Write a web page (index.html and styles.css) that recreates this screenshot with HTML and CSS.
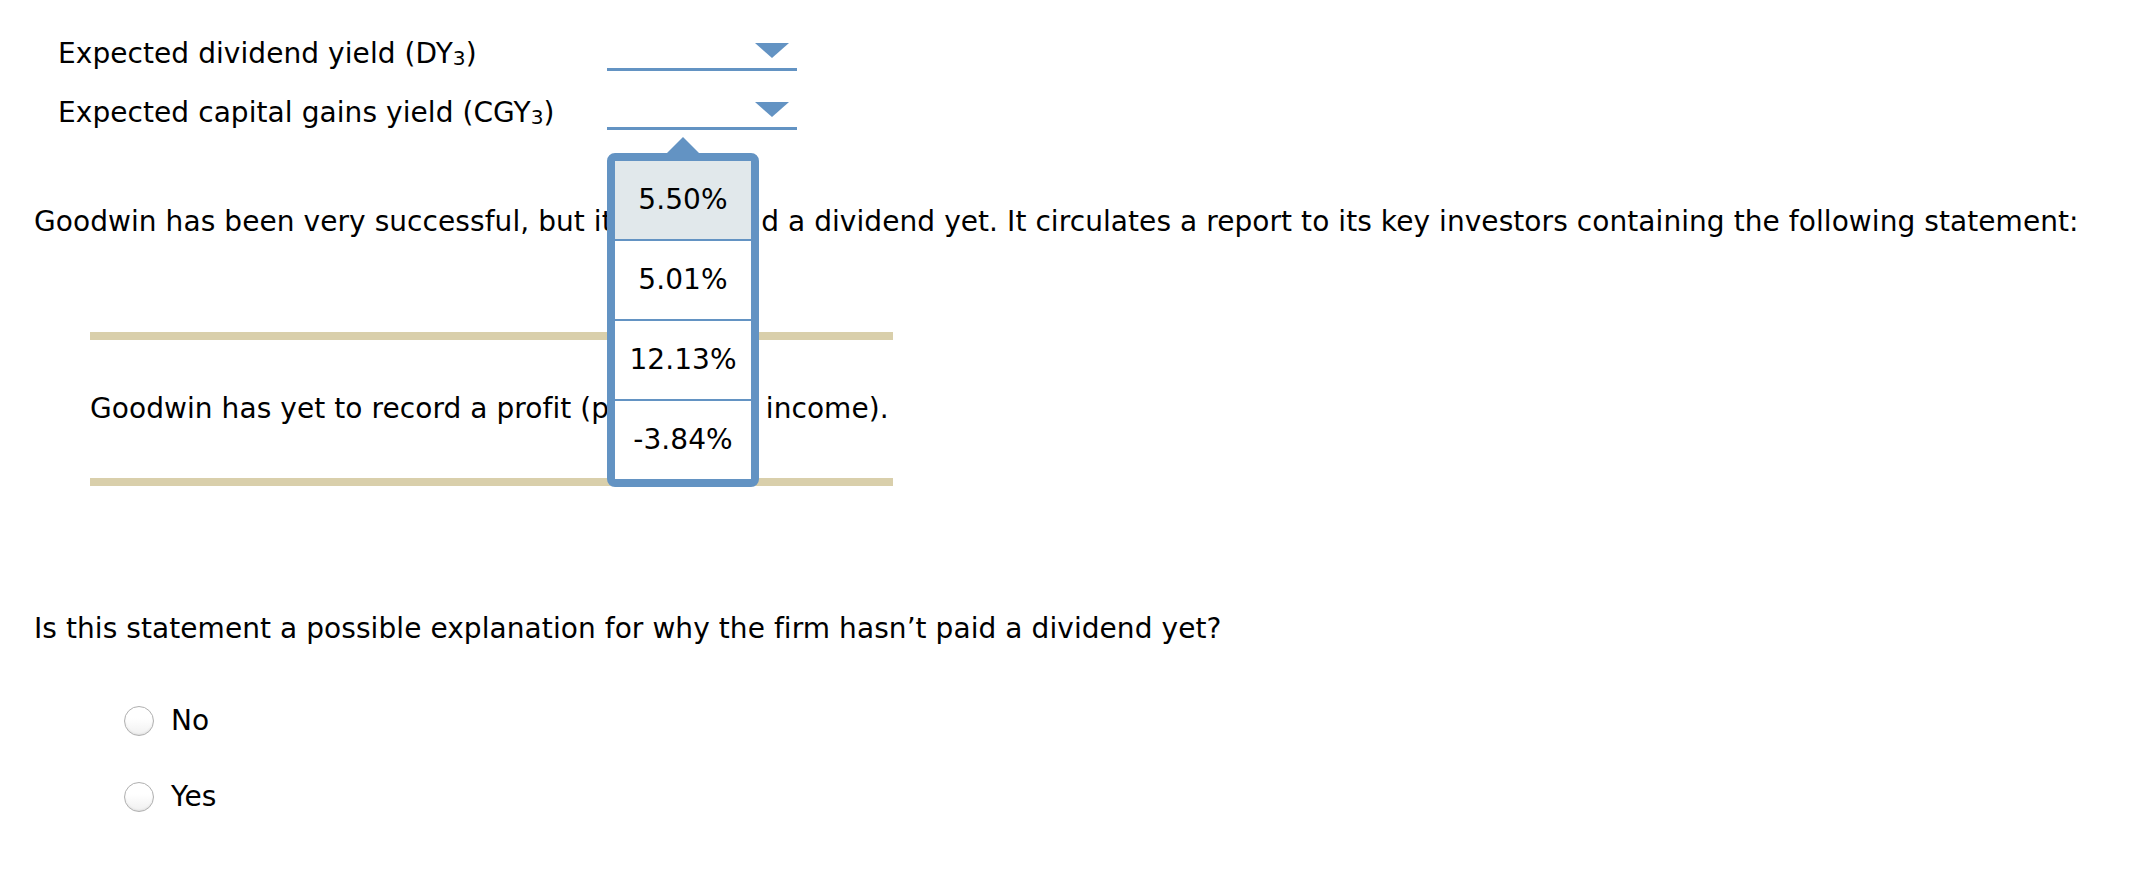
FILE: index.html
```html
<!DOCTYPE html>
<html lang="en">
<head>
<meta charset="utf-8">
<title>Dividend question</title>
<link rel="stylesheet" href="styles.css">
</head>
<body>
<div class="page">
  <div class="rows">
    <div class="row">
      <div class="label">Expected dividend yield (DY<sub>3</sub>)</div>
      <div class="select"><span class="caret"></span></div>
    </div>
    <div class="row">
      <div class="label">Expected capital gains yield (CGY<sub>3</sub>)</div>
      <div class="select open">
        <span class="caret"></span>
        <div class="popup">
          <span class="popup-arrow"></span>
          <div class="option selected">5.50%</div>
          <div class="option">5.01%</div>
          <div class="option">12.13%</div>
          <div class="option">-3.84%</div>
        </div>
      </div>
    </div>
  </div>

  <p class="para">Goodwin has been very successful, but it hasn’t paid a dividend yet. It circulates a report to its key investors containing the following statement:</p>

  <div class="statement">
    <p>Goodwin has yet to record a profit (positive net income).</p>
  </div>

  <p class="question">Is this statement a possible explanation for why the firm hasn’t paid a dividend yet?</p>

  <div class="choices">
    <label class="choice"><span class="radio"></span><span>No</span></label>
    <label class="choice"><span class="radio"></span><span>Yes</span></label>
  </div>
</div>
</body>
</html>
```
FILE: styles.css
```css
html, body {
  margin: 0;
  padding: 0;
  background: #ffffff;
}

body {
  font-family: "DejaVu Sans", Verdana, "Noto Sans", sans-serif;
  font-size: 28px;
  line-height: 34px;
  letter-spacing: 0.07px;
  color: #000000;
}

.page {
  padding-left: 34px;
}

.rows {
  padding-top: 37px;
  padding-left: 24px;
  display: flex;
  flex-direction: column;
  gap: 25px;
}

.row {
  display: flex;
  align-items: flex-end;
}

.label {
  width: 549px;
  white-space: nowrap;
}

.label sub {
  font-size: 72%;
  line-height: 0;
  vertical-align: -0.12em;
}

.select {
  position: relative;
  width: 190px;
  height: 25px;
  padding-top: 6px;
  border-bottom: 3px solid #6393c3;
  display: flex;
  justify-content: flex-end;
  align-items: flex-start;
  box-sizing: content-box;
}

.caret {
  display: block;
  width: 0;
  height: 0;
  margin-right: 8px;
  border-left: 17px solid transparent;
  border-right: 17px solid transparent;
  border-top: 15px solid #6393c3;
}

.popup {
  position: absolute;
  left: 0;
  top: calc(100% + 26px);
  width: 136px;
  border: 8px solid #6393c3;
  border-radius: 8px;
  background: #ffffff;
  display: flex;
  flex-direction: column;
  z-index: 5;
}

.popup-arrow {
  position: absolute;
  left: 52px;
  top: -24px;
  width: 0;
  height: 0;
  border-left: 16px solid transparent;
  border-right: 16px solid transparent;
  border-bottom: 16px solid #6393c3;
}

.option {
  height: 78px;
  display: flex;
  align-items: center;
  justify-content: center;
  background: #ffffff;
}

.option + .option {
  border-top: 2px solid #6393c3;
}

.option.selected {
  background: #e1e8eb;
}

.para {
  margin: 75px 0 0 0;
  white-space: nowrap;
}

.statement {
  margin: 93px 0 0 56px;
  width: 803px;
  border-top: 8px solid #d9cfab;
  border-bottom: 8px solid #d9cfab;
  padding: 52px 0;
}

.statement p {
  margin: 0;
  white-space: nowrap;
}

.question {
  margin: 126px 0 0 0;
}

.choices {
  margin-top: 58px;
  padding-left: 90px;
  display: flex;
  flex-direction: column;
  gap: 42px;
}

.choice {
  display: flex;
  align-items: center;
  gap: 17px;
  height: 34px;
}

.radio {
  display: block;
  width: 28px;
  height: 28px;
  border-radius: 50%;
  border: 1.5px solid #b0b0b0;
  background: linear-gradient(#ffffff 40%, #f0f0f0);
  box-shadow: inset 0 -1px 2px rgba(0,0,0,0.08);
}
```
